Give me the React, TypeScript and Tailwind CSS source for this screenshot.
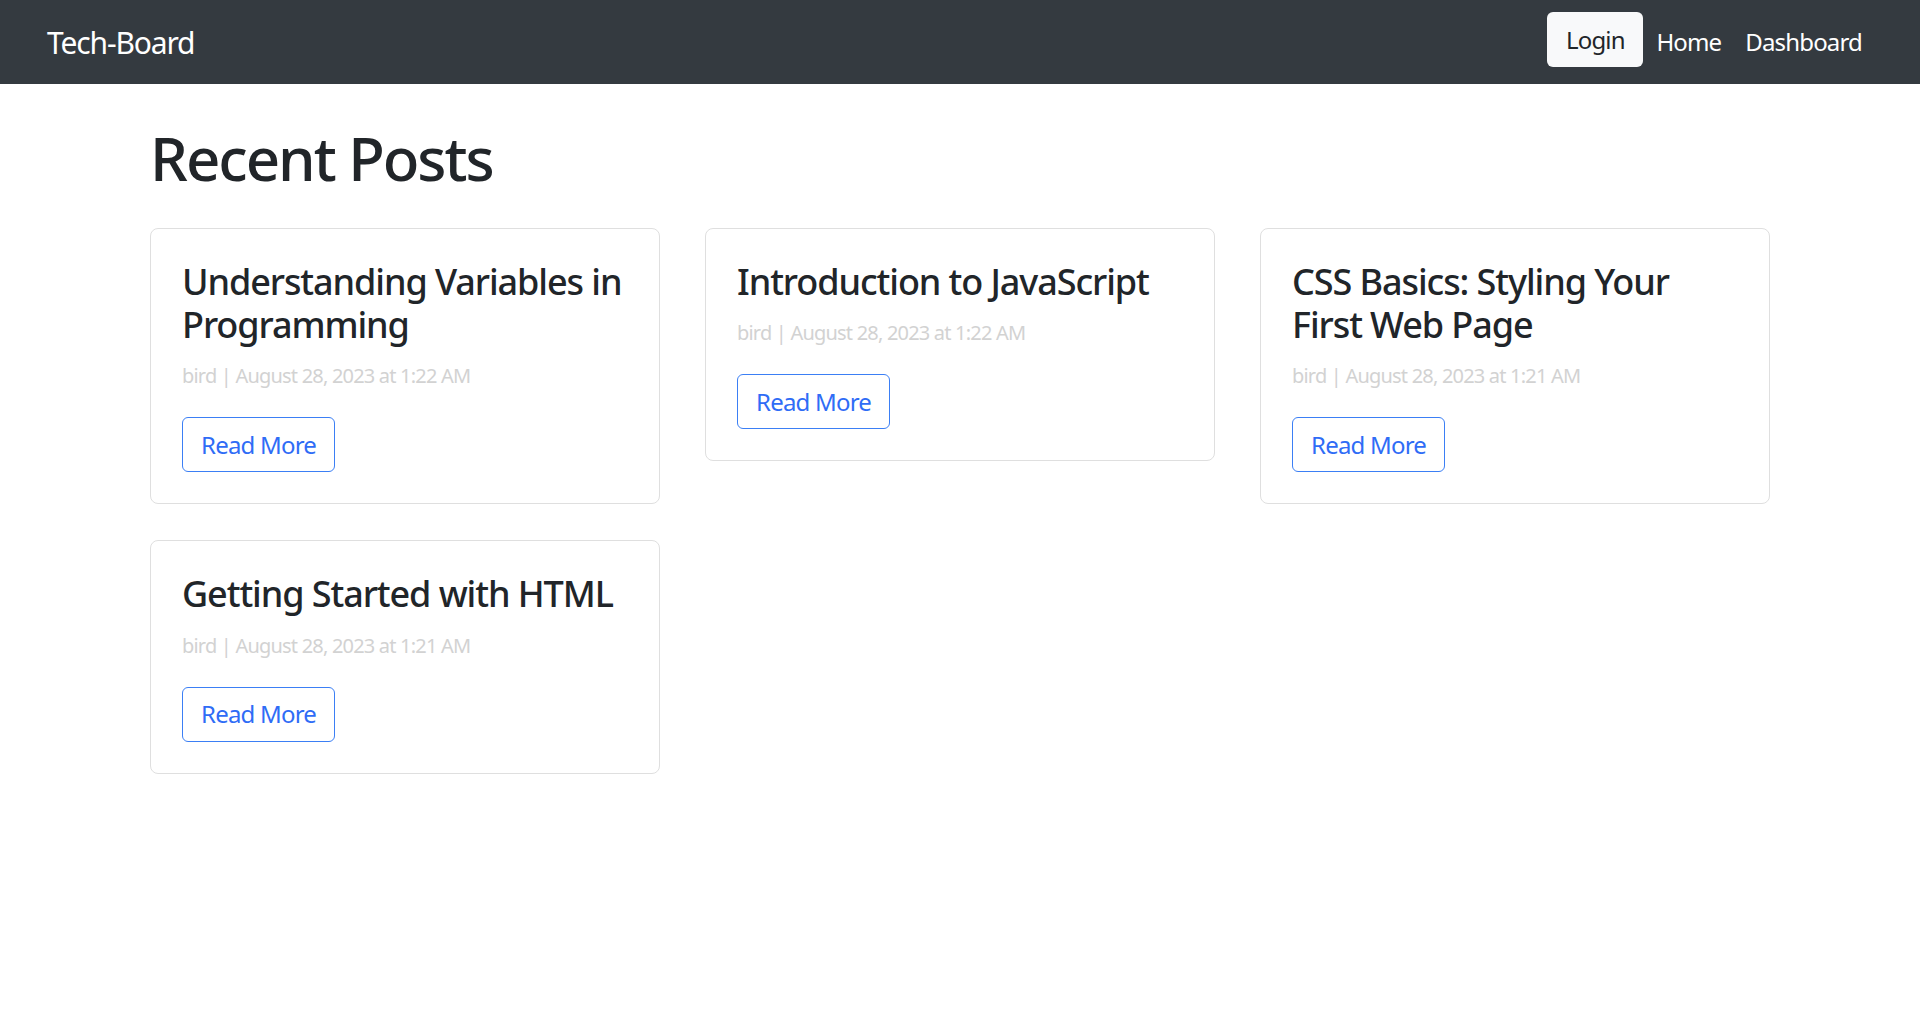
import React from "react";

const posts = [
  { title: "Understanding Variables in Programming", author: "bird", date: "August 28, 2023 at 1:22 AM" },
  { title: "Introduction to JavaScript", author: "bird", date: "August 28, 2023 at 1:22 AM" },
  { title: "CSS Basics: Styling Your First Web Page", author: "bird", date: "August 28, 2023 at 1:21 AM" },
  { title: "Getting Started with HTML", author: "bird", date: "August 28, 2023 at 1:21 AM" },
];

function PostCard({ post }: any) {
  return (
    <div className="border border-[#dfdfdf] rounded-[8px] bg-white px-[31px] pt-[31px] pb-[31px]">
      <h4 className="text-[36px] leading-[1.2] font-medium tracking-[-0.03em] text-[#212529] mb-[14px]">{post.title}</h4>
      <p className="text-[20px] leading-[32px] tracking-[-0.04em] text-[#d2d2d2] mb-[25px]">
        {post.author} | {post.date}
      </p>
      <button className="border border-[#3b7ff5] text-[#2f6cf6] text-[24px] leading-[36px] tracking-[-0.033em] px-[18px] py-[8.5px] rounded-[6px] bg-white">
        Read More
      </button>
    </div>
  );
}

export default function App() {
  return (
    <div className="min-h-screen bg-white font-['Noto_Sans',sans-serif] text-[#212529]">
      {/* navbar */}
      <nav className="h-[84px] bg-[#343a40] flex items-center justify-between pl-[47px] pr-[58px]">
        <a className="text-[30px] tracking-[-0.038em] text-white">Tech-Board</a>
        <div className="flex items-center">
          <button className="bg-[#f8f9fa] text-[#212529] text-[24px] tracking-[-0.035em] rounded-[6px] h-[55px] w-[96px] mb-[5px]">Login</button>
          <a className="text-[24px] tracking-[-0.035em] text-white ml-[13px]">Home</a>
          <a className="text-[24px] tracking-[-0.035em] text-white ml-[24px]">Dashboard</a>
        </div>
      </nav>

      <main className="w-[1620px] mx-auto">
        <h1 className="text-[60px] leading-[1.2] font-medium tracking-[-0.034em] mt-[38px] mb-[34px]">Recent Posts</h1>
        <div className="grid grid-cols-3 gap-x-[45px] gap-y-[36px] items-start">
          {posts.map((p, i) => (
            <PostCard key={i} post={p} />
          ))}
        </div>
      </main>
    </div>
  );
}
